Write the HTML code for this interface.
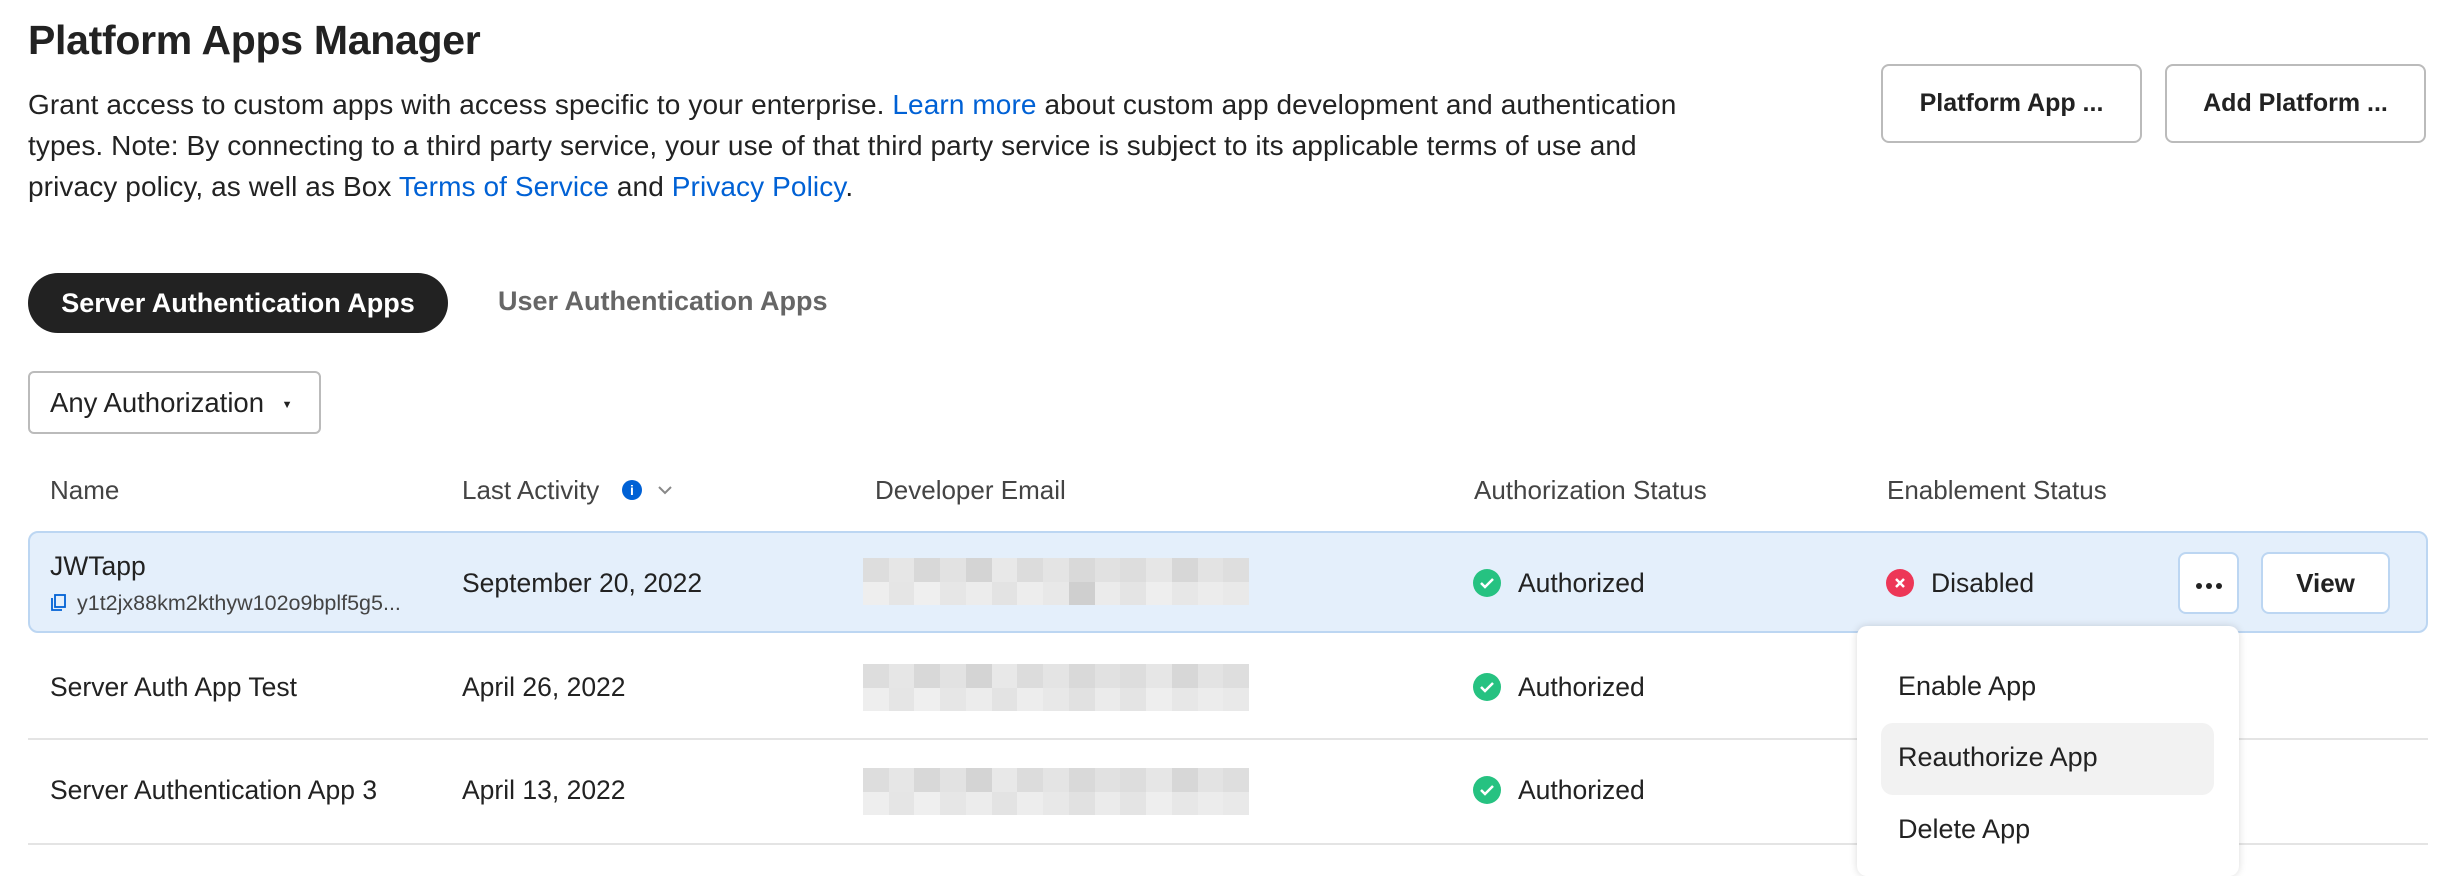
<!DOCTYPE html>
<html><head><meta charset="utf-8"><style>
*{box-sizing:border-box;margin:0;padding:0}
body{width:2464px;height:862px;overflow:hidden;background:#fff;font-family:"Liberation Sans",sans-serif;color:#222;position:relative}
.a{position:absolute;white-space:nowrap}
h1{position:absolute;left:28px;top:17px;font-size:41px;font-weight:bold;color:#222;letter-spacing:-0.3px}
.p{position:absolute;left:28px;top:84px;font-size:28px;line-height:41px;color:#222;white-space:nowrap;letter-spacing:0.1px}
.p a{color:#0061d5;text-decoration:none}
.btn{position:absolute;border:2px solid #bbb;border-radius:8px;background:#fff;font-weight:bold;font-size:25px;display:flex;align-items:center;justify-content:center;color:#222}
.hd{position:absolute;top:475px;font-size:26px;color:#444}
.txt{font-size:26.5px;color:#222}
.mos{position:absolute;left:863px;width:386px;height:47px;display:grid;grid-template-columns:repeat(15,1fr);grid-template-rows:1fr 1fr}
.sep{position:absolute;left:28px;width:2400px;height:2px;background:#e4e4e4}
.dot{display:inline-block;width:6px;height:6px;border-radius:50%;background:#222;margin:0 2px}
</style></head><body>
<h1>Platform Apps Manager</h1>
<div class="p">Grant access to custom apps with access specific to your enterprise. <a>Learn more</a> about custom app development and authentication<br>types. Note: By connecting to a third party service, your use of that third party service is subject to its applicable terms of use and<br>privacy policy, as well as Box <a>Terms of Service</a> and <a>Privacy Policy</a>.</div>
<div class="btn" style="left:1881px;top:64px;width:261px;height:79px">Platform App ...</div>
<div class="btn" style="left:2165px;top:64px;width:261px;height:79px">Add Platform ...</div>
<div class="a" style="left:28px;top:273px;width:420px;height:60px;border-radius:30px;background:#222;color:#fff;font-weight:bold;font-size:27px;display:flex;align-items:center;justify-content:center">Server Authentication Apps</div>
<div class="a" style="left:498px;top:286px;font-weight:bold;font-size:27px;color:#666">User Authentication Apps</div>
<div class="a" style="left:28px;top:371px;width:293px;height:63px;border:2px solid #bbb;border-radius:6px;font-size:27.5px;padding:14px 0 0 20px">Any Authorization <span style="font-size:11px;position:relative;top:-4px;margin-left:10px">▼</span></div>
<div class="hd" style="left:50px">Name</div>
<div class="hd" style="left:462px">Last Activity</div>
<div class="a" style="left:622px;top:480px;width:20px;height:20px;border-radius:50%;background:#0061d5;color:#fff;font-size:14px;font-weight:bold;text-align:center;line-height:20px">i</div>
<svg class="a" style="left:657px;top:484px" width="16" height="12"><path d="M2 3l6 6 6-6" fill="none" stroke="#888" stroke-width="2"/></svg>
<div class="hd" style="left:875px">Developer Email</div>
<div class="hd" style="left:1474px">Authorization Status</div>
<div class="hd" style="left:1887px">Enablement Status</div>
<div class="a" style="left:28px;top:531px;width:2400px;height:102px;background:#e4effb;border:2px solid #bcd6f2;border-radius:10px"></div>
<div class="a txt" style="left:50px;top:551px">JWTapp</div>
<svg class="a" style="left:51px;top:594px" width="16" height="18"><rect x="4" y="1" width="10" height="12" fill="none" stroke="#0061d5" stroke-width="1.8"/><path d="M1 4v12h10" fill="none" stroke="#0061d5" stroke-width="1.8"/></svg>
<div class="a" style="left:77px;top:591px;font-size:21.5px;color:#444">y1t2jx88km2kthyw102o9bplf5g5...</div>
<div class="a txt" style="left:462px;top:568px">September 20, 2022</div>
<div class="a txt" style="left:50px;top:672px">Server Auth App Test</div>
<div class="a txt" style="left:462px;top:672px">April 26, 2022</div>
<div class="sep" style="top:738px"></div>
<div class="a txt" style="left:50px;top:775px">Server Authentication App 3</div>
<div class="a txt" style="left:462px;top:775px">April 13, 2022</div>
<div class="sep" style="top:843px"></div>
<div class="mos" style="top:558px">
<i style="background:#ddd"></i><i style="background:#e6e6e6"></i><i style="background:#d8d8d8"></i><i style="background:#e2e2e2"></i><i style="background:#d4d4d4"></i><i style="background:#e8e8e8"></i><i style="background:#dcdcdc"></i><i style="background:#e4e4e4"></i><i style="background:#d9d9d9"></i><i style="background:#e1e1e1"></i><i style="background:#ddd"></i><i style="background:#e6e6e6"></i><i style="background:#d7d7d7"></i><i style="background:#e3e3e3"></i><i style="background:#dedede"></i>
<i style="background:#eee"></i><i style="background:#e5e5e5"></i><i style="background:#efefef"></i><i style="background:#e6e6e6"></i><i style="background:#ececec"></i><i style="background:#e3e3e3"></i><i style="background:#ededed"></i><i style="background:#e8e8e8"></i><i style="background:#cfcfcf"></i><i style="background:#ebebeb"></i><i style="background:#e4e4e4"></i><i style="background:#eee"></i><i style="background:#e7e7e7"></i><i style="background:#ececec"></i><i style="background:#e9e9e9"></i></div>
<div class="mos" style="top:664px">
<i style="background:#ddd"></i><i style="background:#e6e6e6"></i><i style="background:#d8d8d8"></i><i style="background:#e2e2e2"></i><i style="background:#d4d4d4"></i><i style="background:#e8e8e8"></i><i style="background:#dcdcdc"></i><i style="background:#e4e4e4"></i><i style="background:#d9d9d9"></i><i style="background:#e1e1e1"></i><i style="background:#ddd"></i><i style="background:#e6e6e6"></i><i style="background:#d7d7d7"></i><i style="background:#e3e3e3"></i><i style="background:#dedede"></i>
<i style="background:#eee"></i><i style="background:#e5e5e5"></i><i style="background:#efefef"></i><i style="background:#e6e6e6"></i><i style="background:#ececec"></i><i style="background:#e3e3e3"></i><i style="background:#ededed"></i><i style="background:#e8e8e8"></i><i style="background:#e1e1e1"></i><i style="background:#ebebeb"></i><i style="background:#e4e4e4"></i><i style="background:#eee"></i><i style="background:#e7e7e7"></i><i style="background:#ececec"></i><i style="background:#e9e9e9"></i></div>
<div class="mos" style="top:768px">
<i style="background:#ddd"></i><i style="background:#e6e6e6"></i><i style="background:#d8d8d8"></i><i style="background:#e2e2e2"></i><i style="background:#d4d4d4"></i><i style="background:#e8e8e8"></i><i style="background:#dcdcdc"></i><i style="background:#e4e4e4"></i><i style="background:#d9d9d9"></i><i style="background:#e1e1e1"></i><i style="background:#ddd"></i><i style="background:#e6e6e6"></i><i style="background:#d7d7d7"></i><i style="background:#e3e3e3"></i><i style="background:#dedede"></i>
<i style="background:#eee"></i><i style="background:#e5e5e5"></i><i style="background:#efefef"></i><i style="background:#e6e6e6"></i><i style="background:#ececec"></i><i style="background:#e3e3e3"></i><i style="background:#ededed"></i><i style="background:#e8e8e8"></i><i style="background:#e1e1e1"></i><i style="background:#ebebeb"></i><i style="background:#e4e4e4"></i><i style="background:#eee"></i><i style="background:#e7e7e7"></i><i style="background:#ececec"></i><i style="background:#e9e9e9"></i></div>
<svg class="a" style="left:1473px;top:569px" width="28" height="28"><circle cx="14" cy="14" r="14" fill="#26c281"/><path d="M8 14l4 4 8-8" fill="none" stroke="#fff" stroke-width="2.5"/></svg>
<div class="a txt" style="left:1518px;top:568px">Authorized</div>
<svg class="a" style="left:1473px;top:673px" width="28" height="28"><circle cx="14" cy="14" r="14" fill="#26c281"/><path d="M8 14l4 4 8-8" fill="none" stroke="#fff" stroke-width="2.5"/></svg>
<div class="a txt" style="left:1518px;top:672px">Authorized</div>
<svg class="a" style="left:1473px;top:776px" width="28" height="28"><circle cx="14" cy="14" r="14" fill="#26c281"/><path d="M8 14l4 4 8-8" fill="none" stroke="#fff" stroke-width="2.5"/></svg>
<div class="a txt" style="left:1518px;top:775px">Authorized</div>
<svg class="a" style="left:1886px;top:569px" width="28" height="28"><circle cx="14" cy="14" r="14" fill="#ed3757"/><path d="M10 10l8 8M18 10l-8 8" stroke="#fff" stroke-width="2.5"/></svg>
<div class="a txt" style="left:1931px;top:568px">Disabled</div>
<div class="btn" style="left:2178px;top:552px;width:61px;height:62px;border-color:#bcd6f2;padding-top:6px"><span class="dot"></span><span class="dot"></span><span class="dot"></span></div>
<div class="btn" style="left:2261px;top:552px;width:129px;height:62px;border-color:#bcd6f2;font-size:26px">View</div>
<div class="a" style="left:1857px;top:626px;width:382px;height:250px;background:#fff;border-radius:10px;box-shadow:0 0 8px rgba(0,0,0,.15)"></div>
<div class="a" style="left:1881px;top:723px;width:333px;height:72px;background:#f2f2f2;border-radius:12px"></div>
<div class="a" style="left:1898px;top:671px;font-size:27px">Enable App</div>
<div class="a" style="left:1898px;top:742px;font-size:27px">Reauthorize App</div>
<div class="a" style="left:1898px;top:814px;font-size:27px">Delete App</div>
</body></html>
